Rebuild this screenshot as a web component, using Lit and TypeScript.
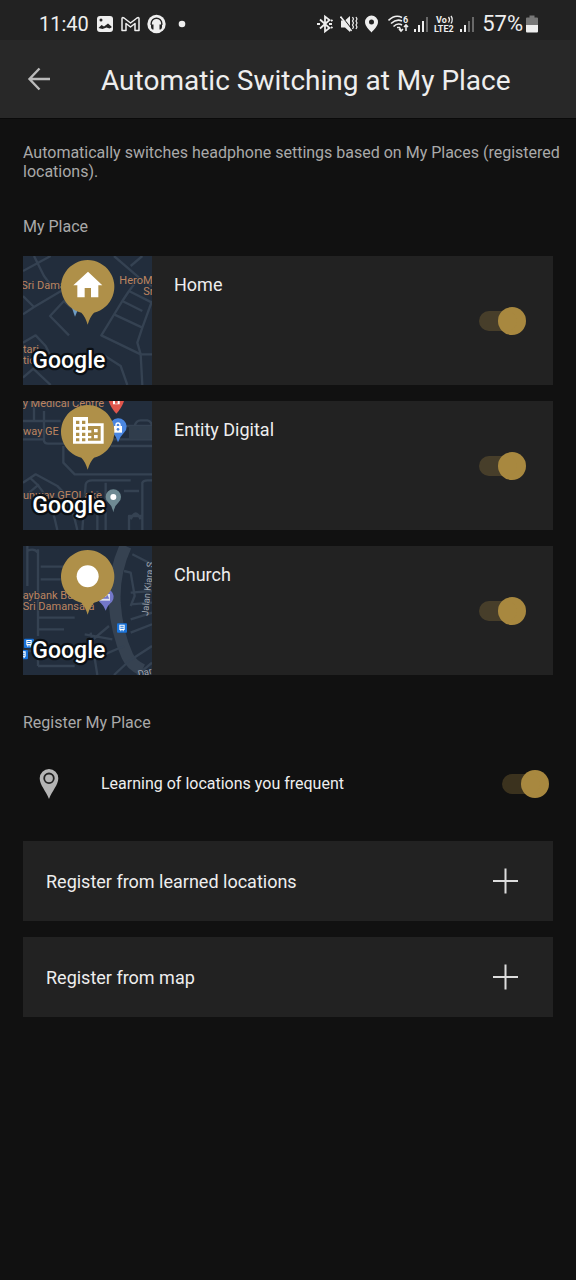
import { LitElement, html, svg, css } from "lit";
import { customElement, property } from "lit/decorators.js";

type PlaceKind = "home" | "office" | "other";

const homeMap = svg`
  <g class="road">
    <path d="M27 205 L60 183 L150 130 M27 150 L60 183 M60 30 L90 90 L120 130 M27 75 L110 30"/>
    <path d="M165 268 L108 210 L150 165 L185 195 M27 290 L65 268 L95 300 L110 330"/>
    <path d="M300 30 L375 95 L345 135 L325 165 L262 268 L380 325 L414 325 M375 95 L414 120"/>
    <path d="M325 165 L385 195 M300 205 L385 245 L370 290 L380 325 M414 165 L385 245 M345 135 L414 170"/>
    <path d="M380 325 L385 417 M265 325 L320 360 L340 417 M27 395 L90 340 M60 370 L110 417 M350 60 L385 30"/>
  </g>
  <g class="poi">
    <text x="22" y="130">Sri Dama</text>
    <text x="316" y="114">HeroM</text>
    <text x="388" y="147">Sr</text>
    <text x="27" y="320">tari</text>
    <text x="27" y="354">tion</text>
  </g>
  <path fill="#6f9cc4" d="M172 180 L183 212 L196 180Z"/>`;

const officeMap = svg`
  <g class="road">
    <path d="M90 60 V150 Q92 158 102 158 H150 M27 90 H140 M27 145 H90 M60 30 V90"/>
    <path d="M148 165 V215 L182 250 H414 M290 165 H414 M290 145 H414 M300 105 H414 M362 105 Q366 88 380 88 H400 Q412 90 414 105"/>
    <path d="M27 275 L65 250 L130 285 Q170 320 190 417 M50 262 Q110 310 130 417 M27 320 L75 280"/>
    <path d="M205 417 L215 280 Q218 268 235 268 H350 M250 300 V417 M275 275 V417 M330 300 H375 M345 417 V375 H385 V275 Q388 268 400 268 H414 M385 375 V417 M350 385 Q365 350 380 385"/>
  </g>
  <path class="block" d="M345 105h69v40h-69z"/>
  <path fill="#e0564c" d="M284 30 Q290 50 307 68 Q324 50 330 30Z"/>
  <path fill="#fff" d="M297 30h6v8h8v-8h6v10h-20z"/>
  <path fill="#4a86e0" d="M312 154 Q308 138 297 126 A25 25 0 1 1 331 124 Q317 138 312 154Z"/>
  <path fill="#fff" d="M300 105h24v20h-24z"/>
  <path fill="none" stroke="#fff" stroke-width="4" d="M306 106v-4a6 6 0 0 1 12 0v4"/>
  <circle cx="312" cy="115" r="4" fill="#4a86e0"/>
  <g class="poi">
    <text x="26" y="47">y Medical Centre</text>
    <text x="27" y="132">way GE</text>
    <text x="27" y="324">unway GEOLake</text>
  </g>
  <path fill="#6f8a93" d="M298 364 Q294 344 282 334 A23 23 0 1 1 314 334 Q302 344 298 364Z"/>
  <circle cx="298" cy="318" r="9" fill="#fff"/>`;

const churchMap = svg`
  <path class="avenue" d="M335 30 Q298 110 302 200 Q308 290 340 360 Q352 386 385 402"/>
  <g class="road">
    <path d="M40 30 V150 M72 40 V300 M40 45 Q60 35 72 50 M80 92 H150 M80 130 H140 M72 245 H182 M72 280 H150 M72 390 H182 M72 310 V390 M27 345 H72"/>
    <path d="M355 55 L414 85 M330 105 L350 110 L362 180 L350 210 M350 170 L414 165 M414 200 L350 205"/>
    <path d="M212 295 L295 310 M220 325 L285 270 M230 290 L250 417 M250 365 L330 330 M300 417 L345 375 L414 330 M350 290 L414 265 M350 250 L414 230 M370 417 L414 380"/>
  </g>
  <path fill="#7377c9" d="M275 224 Q268 206 256 197 A24 24 0 1 1 294 197 Q282 206 275 224Z"/>
  <path fill="#dfe3f2" d="M258 174h30v20h-30z"/>
  <path fill="#7377c9" d="M262 188l8-9 5 5 5-8 6 12z"/>
  <g fill="#1a73d9">
    <rect x="309" y="262" width="30" height="28" rx="3"/>
    <rect x="30" y="308" width="30" height="28" rx="3"/>
    <rect x="12" y="342" width="30" height="28" rx="3"/>
  </g>
  <g fill="#fff">
    <path d="M316 266h16v16h-3v4h-3v-4h-4v4h-3v-4h-3z M37 312h16v16h-3v4h-3v-4h-4v4h-3v-4h-3z M20 346h15v16h-3v4h-3v-4h-9z"/>
  </g>
  <g fill="#1a73d9">
    <path d="M319 269h10v3h-10z M319 275h10v3h-10z M40 315h10v3h-10z M40 321h10v3h-10z M25 350h7v3h-7z M25 356h7v3h-7z"/>
  </g>
  <g class="poi">
    <text x="26" y="189">aybank Ba</text>
    <text x="26" y="222">Sri Damansara</text>
  </g>
  <text class="street" transform="translate(402 240) rotate(-84)">Jalan Kiara S</text>
  <text class="street" transform="translate(374 424) rotate(-14)">Dar</text>`;

const glyphs: Record<PlaceKind, unknown> = {
  home: svg`<path fill="#fff" d="M222 77 L265 118 H253 V154 H231 V126 H212 V154 H190 V118 H178Z"/>`,
  office: svg`<path fill="#fff" fill-rule="evenodd" d="M177 78H222V97H269V158H177Z
    M186 89h10v10h-10z M204 89h10v10h-10z M186 107h10v10h-10z M204 107h10v10h-10z M186 125h10v10h-10z M204 125h10v10h-10z M186 142h10v9h-10z M204 142h10v9h-10z
    M222 105H260V149H222V142H232V135H222V125H232V118H222Z"/>
    <path fill="#fff" d="M240 114h11v10h-11z M240 132h11v10h-11z"/>`,
  other: svg`<circle cx="221" cy="121" r="33" fill="#fff"/>`,
};

const maps: Record<PlaceKind, unknown> = { home: homeMap, office: officeMap, other: churchMap };

@customElement("map-thumb")
export class MapThumb extends LitElement {
  @property() kind: PlaceKind = "home";

  static styles = css`
    :host { display: block; background: #222d3c; }
    .map { display: block; width: 100%; height: 100%; }
    .road { fill: none; stroke: #354252; stroke-width: 7; stroke-linejoin: round; }
    .avenue { fill: none; stroke: #364251; stroke-width: 36; }
    .block { fill: #303d4c; }
    .poi { fill: #bd8560; font: 33px Roboto, sans-serif; stroke: #222d3c; stroke-width: 4; paint-order: stroke; }
    .street { fill: #a3a9b2; font: 28px Roboto, sans-serif; }
    .brand {
      fill: #fff; font: 500 69px Roboto, sans-serif;
      stroke: #0b0f14; stroke-width: 14; stroke-linejoin: round; paint-order: stroke;
    }
  `;

  render() {
    return html`<svg class="map" viewBox="27 30 387 387" preserveAspectRatio="xMidYMid slice" role="img" aria-label="Map">
      ${maps[this.kind]}
      <path fill="#af9049" d="M221 236 Q214 212 202 200 A80 80 0 1 1 240 200 Q228 212 221 236Z"/>
      ${glyphs[this.kind]}
      <text class="brand" x="55" y="366">Google</text>
    </svg>`;
  }
}

const signal = (level: number, width: number) => html`
  <svg width=${width} height="20" viewBox="0 0 ${width} 20" fill="#eee">
    ${[0, 1, 2, 3].map((i) => svg`<rect x=${1 + i * 4} y=${15 - i * 4} width="2" height=${3 + i * 4} opacity=${i < level ? 1 : 0.35} />`)}
  </svg>`;

@customElement("status-bar")
export class StatusBar extends LitElement {
  static styles = css`
    :host {
      display: flex; justify-content: space-between; align-items: center;
      height: 40px; padding: 8px 37px 0 39px; box-sizing: border-box;
      background: #222; color: #eee; line-height: 32px;
    }
    .group { display: flex; align-items: center; }
    .left { gap: 7px; font-size: 20px; }
    .right { gap: 3px; font-size: 22px; }
    svg { display: block; flex: none; }
    .tiny { font: 700 9px Roboto, sans-serif; }
  `;

  render() {
    return html`
      <div class="group left">
        <span>11:40</span>
        <svg width="18" height="20" viewBox="0 0 18 20">
          <rect x="1" y="2" width="16" height="16" rx="3" fill="#eee"/>
          <circle cx="5" cy="6" r="1.5" fill="#222"/>
          <path fill="#222" d="M2.500 14l3-3 2.500 1.500 4-3 3.500 3v1l-2 1-3-1-4 1.500z"/>
        </svg>
        <svg width="19" height="20" viewBox="0 0 19 20" fill="none" stroke="#eee" stroke-width="1.500" stroke-linejoin="round">
          <path d="M1 16.500V4.500Q1 3 3 4L9.500 9 16 4Q18 3 18 4.500V16.500H14V9.500L9.500 13 5 9.500V16.500Z"/>
        </svg>
        <svg width="19" height="20" viewBox="0 0 19 20">
          <circle cx="9.500" cy="10" r="9.200" fill="#eee"/>
          <path d="M4.200 11V9.500a5.300 5.300 0 0 1 10.600 0V11" fill="none" stroke="#222" stroke-width="1.400"/>
          <path d="M4 10.500h2.500v5H5.500Q4 14.500 4 13zM15 10.500h-2.500v5h1Q15 14.500 15 13z" fill="#222"/>
        </svg>
        <svg width="19" height="20" viewBox="0 0 19 20"><circle cx="9" cy="10" r="3.300" fill="#eee"/></svg>
      </div>
      <div class="group right">
        <svg width="21" height="20" viewBox="0 0 21 20" fill="none" stroke="#eee" stroke-width="1.800">
          <path d="M4 5.500L13.500 14 9 17.500V2.500L13.500 6 4 14.500"/>
          <path d="M1 10h3M13 10h3M15 7l1.500-1M15 13l1.500 1" stroke-width="2"/>
        </svg>
        <svg width="21" height="20" viewBox="0 0 21 20">
          <path d="M1 6.500h4l5-4.500v16L5 13.500H1z" fill="#eee"/>
          <path d="M1.500 2L12.500 16" stroke="#222" stroke-width="1.200"/>
          <path d="M0.500 2.500L11.500 17" stroke="#eee" stroke-width="1.600"/>
          <path d="M12.500 3l1 2-1 2 1 2-1 2 1 2-1 2M16 3l1 2-1 2 1 2-1 2 1 2-1 2" fill="none" stroke="#eee" stroke-width="1.200"/>
        </svg>
        <svg width="21" height="20" viewBox="0 0 21 20">
          <path fill="#eee" fill-rule="evenodd" d="M7.500 1.500a6.500 6.500 0 0 1 6.500 6.500c0 4-4 7.500-6.500 10.500C5 15.500 1 12 1 8a6.500 6.500 0 0 1 6.500-6.500zM7.500 5.500a2.500 2.500 0 1 0 0 5 2.500 2.500 0 0 0 0-5z"/>
        </svg>
        <svg width="22" height="20" viewBox="0 0 22 20" fill="none" stroke="#eee" stroke-width="1.600">
          <path d="M0.500 6.500Q7 0 14 3.500M3 9.500Q8.500 4.500 14 7M5.500 12.500Q9.500 8.500 14 11"/>
          <path d="M9 13.500h2.500l1.500 3M11 15l2 2.200 2-2.200M18 17v-6M16 13l2-2.200 2 2.200" stroke-width="1.500"/>
          <text class="tiny" x="15" y="9" fill="#eee" stroke="none">6</text>
        </svg>
        ${signal(3, 17)}
        <svg width="23" height="20" viewBox="0 0 23 20">
          <text class="tiny" x="3" y="9" fill="#eee">Vo</text>
          <path d="M15.500 3q2 2.500 0 5.500M18 2q2.500 3.500 0 7.500" fill="none" stroke="#eee" stroke-width="1.300"/>
          <text class="tiny" x="1" y="18" fill="#eee">LTE2</text>
        </svg>
        ${signal(2, 20)}
        <span>57%</span>
        <svg width="13" height="20" viewBox="0 0 13 20">
          <path fill="#777" d="M3.500 1.500h5v2H11a1 1 0 0 1 1 1V11H0V4.500a1 1 0 0 1 1-1h2.500z"/>
          <path fill="#eee" d="M0 11h12v6.500a1 1 0 0 1-1 1H1a1 1 0 0 1-1-1z"/>
        </svg>
      </div>`;
  }
}

@customElement("app-root")
export class AppRoot extends LitElement {
  private places: { name: string; kind: PlaceKind }[] = [
    { name: "Home", kind: "home" },
    { name: "Entity Digital", kind: "office" },
    { name: "Church", kind: "other" },
  ];

  static styles = css`
    :host {
      display: block; min-height: 100vh; background: #111; color: #eee;
      font-family: Roboto, sans-serif; font-size: 18px;
    }
    h1, h2, p, ul { margin: 0; padding: 0; font-weight: 400; }
    .bar {
      display: flex; align-items: center; gap: 49px;
      height: 78px; padding: 0 26px; background: #282828; border-bottom: 1px solid #0a0a0a;
    }
    .back { display: block; padding: 0; border: 0; background: none; }
    .back svg, .plus, .pin { display: block; flex: none; }
    h1 { padding-top: 3px; font-size: 28px; line-height: 36px; }
    main { padding: 24px 23px; }
    .note, h2 { font-size: 16px; line-height: 19px; color: #a9a9a9; }
    .note { margin-right: -12px; }
    h2 { margin: 36px 0 20px; }
    .places, .actions { display: flex; flex-direction: column; gap: 16px; list-style: none; }
    .places { margin-bottom: 38px; }
    .place { display: flex; height: 129px; background: #222; }
    .thumb { width: 129px; flex: none; }
    .place label { flex: 1; padding: 17px 0 0 22px; line-height: 24px; }
    .place .switch { align-self: center; margin-right: 27px; }
    .switch {
      appearance: none; display: grid; align-items: center; flex: none;
      width: 47px; height: 28px; margin: 0;
    }
    .switch::before, .switch::after { content: ""; grid-area: 1 / 1; }
    .switch::before { width: 38px; height: 20px; border-radius: 10px; background: #a8883f; opacity: 0.28; }
    .switch::after { width: 28px; height: 28px; border-radius: 50%; background: #a8883f; justify-self: start; }
    .switch:checked::after { justify-self: end; }
    .learn {
      display: flex; align-items: center; height: 64px; margin-bottom: 25px;
      padding: 0 4px 0 16px; font-size: 16px; line-height: 24px;
    }
    .learn label { flex: 1; padding-left: 42px; }
    .action {
      display: flex; justify-content: space-between; align-items: center;
      height: 80px; padding: 0 35px 0 23px; border: 0; background: #222;
      color: inherit; font: inherit; text-align: left;
    }
  `;

  render() {
    return html`
      <status-bar></status-bar>
      <header class="bar">
        <button class="back" aria-label="Back">
          <svg width="26" height="26" viewBox="0 0 26 26" fill="none" stroke="#bbb" stroke-width="2.400">
            <path d="M24 13H4M13.500 2.500L3.500 13l10 10.500"/>
          </svg>
        </button>
        <h1>Automatic Switching at My Place</h1>
      </header>
      <main>
        <p class="note">Automatically switches headphone settings based on My Places (registered locations).</p>
        <h2>My Place</h2>
        <ul class="places">
          ${this.places.map((p) => html`
            <li class="place">
              <map-thumb class="thumb" .kind=${p.kind}></map-thumb>
              <label for=${p.kind}>${p.name}</label>
              <input class="switch" id=${p.kind} type="checkbox" role="switch" checked>
            </li>`)}
        </ul>
        <h2>Register My Place</h2>
        <div class="learn">
          <svg class="pin" width="20" height="32" viewBox="0 0 20 32">
            <path fill="#b5b5b5" d="M10 1a9.300 9.300 0 0 1 9.300 9.300C19.300 17 13 23 10 31 7 23 .7 17 .7 10.300A9.300 9.300 0 0 1 10 1z"/>
            <circle cx="10" cy="10.300" r="4.800" fill="none" stroke="#222" stroke-width="1.800"/>
          </svg>
          <label for="learn">Learning of locations you frequent</label>
          <input class="switch" id="learn" type="checkbox" role="switch" checked>
        </div>
        <div class="actions">
          ${["Register from learned locations", "Register from map"].map((t) => html`
            <button class="action">${t}
              <svg class="plus" width="25" height="26" viewBox="0 0 25 26" stroke="#ddd" stroke-width="2">
                <path d="M12.500 0.500V25.500M0 13H25"/>
              </svg>
            </button>`)}
        </div>
      </main>`;
  }
}
